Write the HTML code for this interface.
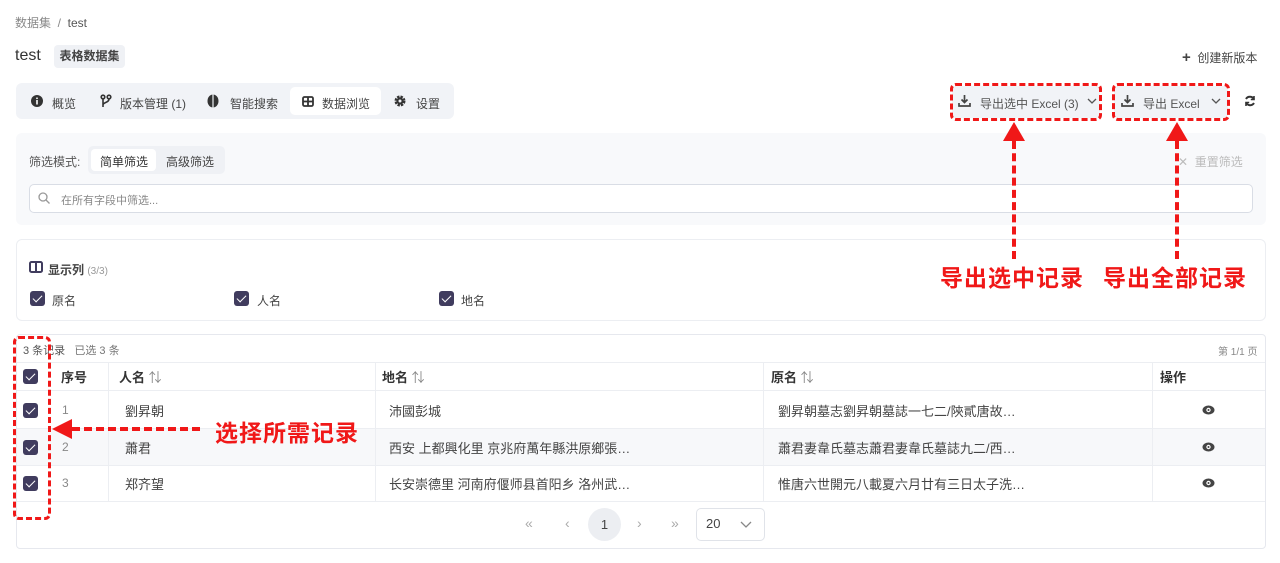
<!DOCTYPE html>
<html><head><meta charset="utf-8"><style>
*{box-sizing:border-box;margin:0;padding:0}
body{width:1280px;height:563px;background:#fff;font-family:"Liberation Sans","Noto Sans CJK SC",sans-serif;color:#333;position:relative;overflow:hidden;font-size:12px}
.a{position:absolute;white-space:nowrap}
.cb{position:absolute;width:15px;height:15px;border-radius:3px;background:#403c5e}
.cb:after{content:"";position:absolute;left:5px;top:2px;width:4px;height:8px;border:solid #fff;border-width:0 1.3px 1.3px 0;transform:rotate(45deg)}
.red{color:#f01818;font-weight:bold;font-size:23px;letter-spacing:1px}
.dash{position:absolute;border:3px dashed #f01818;border-radius:6px}
.vl{position:absolute;width:0;border-left:4px dashed #f01818}
.gray{color:#888}
svg{position:absolute}
</style></head><body>
<div class="a gray" style="left:15px;top:14px">数据集 &nbsp;/&nbsp; <span style="color:#555">test</span></div>
<div class="a" style="left:15px;top:47px;font-size:16px;color:#333">test</div>
<div class="a" style="left:54px;top:45px;width:71px;height:23px;background:#eff1f5;border-radius:4px;font-size:12px;line-height:23px;text-align:center;font-weight:bold;color:#444">表格数据集</div>
<div class="a" style="left:1182px;top:49px;color:#444"><b style="font-size:15px">+</b>&nbsp; 创建新版本</div>

<div class="a" style="left:16px;top:83px;width:438px;height:36px;background:#f1f3f7;border-radius:6px"></div>
<div class="a" style="left:290px;top:87px;width:91px;height:28px;background:#fff;border-radius:5px"></div>
<svg style="left:31px;top:95px" width="12" height="12"><circle cx="6" cy="6" r="6" fill="#333"/><rect x="5.2" y="5" width="1.6" height="4.5" fill="#fff"/><circle cx="6" cy="3.3" r="0.9" fill="#fff"/></svg>
<div class="a" style="left:52px;top:95px;color:#444">概览</div>
<svg style="left:100px;top:94px" width="12" height="14" fill="none" stroke="#333" stroke-width="1.6"><circle cx="3" cy="3" r="1.8"/><circle cx="9" cy="3" r="1.8"/><path d="M3 5v8M9 5c0 4-6 3-6 6"/></svg>
<div class="a" style="left:120px;top:95px;color:#444">版本管理 (1)</div>
<svg style="left:207px;top:94px" width="12" height="14"><ellipse cx="6" cy="7" rx="5.5" ry="6.5" fill="#333"/><rect x="5.4" y="0" width="1.2" height="14" fill="#f1f3f7"/></svg>
<div class="a" style="left:230px;top:95px;color:#444">智能搜索</div>
<svg style="left:302px;top:96px" width="12" height="11" fill="none" stroke="#333" stroke-width="1.8"><rect x="1" y="1" width="10" height="9" rx="1.5"/><path d="M1 5.5h10M6 1v9"/></svg>
<div class="a" style="left:322px;top:95px;color:#444">数据浏览</div>
<svg style="left:394px;top:95px" width="12" height="12"><circle cx="6" cy="6" r="4" fill="none" stroke="#333" stroke-width="3" stroke-dasharray="2.2 1"/><circle cx="6" cy="6" r="3.6" fill="#333"/><circle cx="6" cy="6" r="1.5" fill="#f1f3f7"/></svg>
<div class="a" style="left:416px;top:95px;color:#444">设置</div>

<div class="a" style="left:952px;top:86px;width:148px;height:32px;background:#f1f3f7;border-radius:4px"></div>
<div class="a" style="left:1114px;top:86px;width:114px;height:32px;background:#f1f3f7;border-radius:4px"></div>
<svg style="left:958px;top:95px" width="13" height="12" fill="none" stroke="#444" stroke-width="1.7"><path d="M6.5 0v7M3.5 4.5l3 3 3-3M1 8v3h11V8"/></svg>
<div class="a" style="left:980px;top:95px;color:#555">导出选中 Excel (3)</div>
<svg style="left:1087px;top:98px" width="10" height="6" fill="none" stroke="#555" stroke-width="1.3"><path d="M1 1l4 4 4-4"/></svg>
<svg style="left:1121px;top:95px" width="13" height="12" fill="none" stroke="#444" stroke-width="1.7"><path d="M6.5 0v7M3.5 4.5l3 3 3-3M1 8v3h11V8"/></svg>
<div class="a" style="left:1143px;top:95px;color:#555">导出 Excel</div>
<svg style="left:1211px;top:98px" width="10" height="6" fill="none" stroke="#555" stroke-width="1.3"><path d="M1 1l4 4 4-4"/></svg>
<svg style="left:1244px;top:95px" width="12" height="12" fill="none" stroke="#333" stroke-width="2"><path d="M10 4.5A4.5 4.5 0 0 0 2 4M2 7.5A4.5 4.5 0 0 0 10 8"/><path d="M10 1v3.5H6.8M2 11V7.5h3.2" stroke-width="1.6"/></svg>
<div class="dash" style="left:950px;top:83px;width:152px;height:38px"></div>
<div class="dash" style="left:1112px;top:83px;width:118px;height:38px"></div>

<div class="a" style="left:16px;top:133px;width:1250px;height:92px;background:#f8f9fb;border-radius:6px"></div>
<div class="a" style="left:29px;top:153px;color:#555">筛选模式:</div>
<div class="a" style="left:88px;top:146px;width:137px;height:28px;background:#eff1f5;border-radius:5px"></div>
<div class="a" style="left:91px;top:149px;width:65px;height:22px;background:#fff;border-radius:4px"></div>
<div class="a" style="left:100px;top:153px;color:#333">简单筛选</div>
<div class="a" style="left:166px;top:153px;color:#444">高级筛选</div>
<div class="a" style="left:1178px;top:153px;color:#bbb">✕ &nbsp;重置筛选</div>
<div class="a" style="left:29px;top:184px;width:1224px;height:29px;background:#fff;border:1px solid #d9dde5;border-radius:5px"></div>
<svg style="left:38px;top:192px" width="12" height="12" fill="none" stroke="#999" stroke-width="1.3"><circle cx="5" cy="5" r="4"/><path d="M8 8l3.5 3.5"/></svg>
<div class="a" style="left:61px;top:192px;color:#888;font-size:11px">在所有字段中筛选...</div>

<div class="a" style="left:16px;top:239px;width:1250px;height:82px;border:1px solid #eceef2;border-radius:6px"></div>
<svg style="left:29px;top:261px" width="14" height="12" fill="none" stroke="#403c5e" stroke-width="2"><rect x="1" y="1" width="12" height="10" rx="1.5"/><path d="M7 1v10"/></svg>
<div class="a" style="left:48px;top:261px;color:#444;font-weight:bold">显示列 <span style="color:#999;font-weight:normal;font-size:10px">(3/3)</span></div>
<div class="cb" style="left:30px;top:291px"></div><div class="a" style="left:52px;top:292px;color:#444">原名</div>
<div class="cb" style="left:234px;top:291px"></div><div class="a" style="left:257px;top:292px;color:#444">人名</div>
<div class="cb" style="left:439px;top:291px"></div><div class="a" style="left:461px;top:292px;color:#444">地名</div>

<div class="red a" style="left:940px;top:259px">导出选中记录</div>
<div class="red a" style="left:1103px;top:259px">导出全部记录</div>
<div class="vl" style="left:1012px;top:141px;height:118px"></div>
<div class="vl" style="left:1175px;top:141px;height:118px"></div>
<div class="a" style="left:1003px;top:122px;width:0;height:0;border-left:11px solid transparent;border-right:11px solid transparent;border-bottom:19px solid #f01818"></div>
<div class="a" style="left:1166px;top:122px;width:0;height:0;border-left:11px solid transparent;border-right:11px solid transparent;border-bottom:19px solid #f01818"></div>

<div class="a" style="left:16px;top:334px;width:1250px;height:215px;border:1px solid #e6e8ee;border-radius:4px"></div>
<div class="a" style="left:23px;top:342px;color:#555;font-size:11px">3 条记录 &nbsp; <span style="color:#777">已选 3 条</span></div>
<div class="a" style="left:1218px;top:343px;color:#888;font-size:10px">第 1/1 页</div>
<div class="a" style="left:17px;top:362px;width:1248px;height:1px;background:#eceef2"></div>
<div class="a" style="left:17px;top:428px;width:1248px;height:37px;background:#f7f8fa"></div>
<div class="a" style="left:17px;top:390px;width:1248px;height:1px;background:#eceef2"></div>
<div class="a" style="left:17px;top:428px;width:1248px;height:1px;background:#eceef2"></div>
<div class="a" style="left:17px;top:465px;width:1248px;height:1px;background:#eceef2"></div>
<div class="a" style="left:17px;top:501px;width:1248px;height:1px;background:#eceef2"></div>
<div class="a" style="left:108px;top:362px;width:1px;height:139px;background:#eceef2"></div>
<div class="a" style="left:375px;top:362px;width:1px;height:139px;background:#eceef2"></div>
<div class="a" style="left:763px;top:362px;width:1px;height:139px;background:#eceef2"></div>
<div class="a" style="left:1152px;top:362px;width:1px;height:139px;background:#eceef2"></div>
<div class="cb" style="left:23px;top:369px"></div>
<div class="a" style="left:61px;top:367px;font-weight:bold;font-size:13px;color:#333">序号</div>
<div class="a" style="left:119px;top:367px;font-weight:bold;font-size:13px;color:#333">人名 <span style="font-weight:normal;color:#888">⇅</span></div>
<div class="a" style="left:382px;top:367px;font-weight:bold;font-size:13px;color:#333">地名 <span style="font-weight:normal;color:#888">⇅</span></div>
<div class="a" style="left:771px;top:367px;font-weight:bold;font-size:13px;color:#333">原名 <span style="font-weight:normal;color:#888">⇅</span></div>
<div class="a" style="left:1160px;top:367px;font-weight:bold;font-size:13px;color:#333">操作</div>

<div class="cb" style="left:23px;top:403px"></div><div class="cb" style="left:23px;top:440px"></div><div class="cb" style="left:23px;top:476px"></div>
<div class="a gray" style="left:62px;top:403px">1</div>
<div class="a gray" style="left:62px;top:440px">2</div>
<div class="a gray" style="left:62px;top:476px">3</div>
<div class="a" style="left:125px;top:401px;font-size:13px;color:#444">劉昇朝</div>
<div class="a" style="left:125px;top:438px;font-size:13px;color:#444">蕭君</div>
<div class="a" style="left:125px;top:474px;font-size:13px;color:#444">郑齐望</div>
<div class="a" style="left:389px;top:401px;font-size:13px;color:#444">沛國彭城</div>
<div class="a" style="left:389px;top:438px;font-size:13px;color:#444">西安 上都興化里 京兆府萬年縣洪原鄉張…</div>
<div class="a" style="left:389px;top:474px;font-size:13px;color:#444">长安崇德里 河南府偃师县首阳乡 洛州武…</div>
<div class="a" style="left:778px;top:401px;font-size:13px;color:#444">劉昇朝墓志劉昇朝墓誌一七二/陝貳唐故…</div>
<div class="a" style="left:778px;top:438px;font-size:13px;color:#444">蕭君妻韋氏墓志蕭君妻韋氏墓誌九二/西…</div>
<div class="a" style="left:778px;top:474px;font-size:13px;color:#444">惟唐六世開元八載夏六月廿有三日太子洗…</div>
<svg style="left:1202px;top:405px" width="13" height="10"><ellipse cx="6.5" cy="5" rx="6" ry="4.5" fill="#444"/><circle cx="6.5" cy="5" r="2.2" fill="#fff"/><circle cx="6.5" cy="5" r="1" fill="#444"/></svg>
<svg style="left:1202px;top:442px" width="13" height="10"><ellipse cx="6.5" cy="5" rx="6" ry="4.5" fill="#444"/><circle cx="6.5" cy="5" r="2.2" fill="#fff"/><circle cx="6.5" cy="5" r="1" fill="#444"/></svg>
<svg style="left:1202px;top:478px" width="13" height="10"><ellipse cx="6.5" cy="5" rx="6" ry="4.5" fill="#444"/><circle cx="6.5" cy="5" r="2.2" fill="#fff"/><circle cx="6.5" cy="5" r="1" fill="#444"/></svg>

<div class="a" style="left:525px;top:515px;color:#aaa;font-size:14px">«</div>
<div class="a" style="left:565px;top:515px;color:#aaa;font-size:14px">‹</div>
<div class="a" style="left:588px;top:508px;width:33px;height:33px;border-radius:50%;background:#eceef2;text-align:center;line-height:33px;font-size:13px;color:#444">1</div>
<div class="a" style="left:637px;top:515px;color:#aaa;font-size:14px">›</div>
<div class="a" style="left:671px;top:515px;color:#aaa;font-size:14px">»</div>
<div class="a" style="left:696px;top:508px;width:69px;height:33px;border:1px solid #e0e3e9;border-radius:5px"></div>
<div class="a" style="left:706px;top:516px;font-size:13px;color:#444">20</div>
<svg style="left:740px;top:521px" width="12" height="7" fill="none" stroke="#888" stroke-width="1.3"><path d="M1 1l5 5 5-5"/></svg>

<div class="dash" style="left:13px;top:336px;width:38px;height:184px"></div>
<div class="a" style="left:72px;top:427px;width:128px;border-top:4px dashed #f01818"></div>
<div class="a" style="left:52px;top:419px;width:0;height:0;border-top:10px solid transparent;border-bottom:10px solid transparent;border-right:20px solid #f01818"></div>
<div class="red a" style="left:215px;top:414px">选择所需记录</div>
</body></html>
